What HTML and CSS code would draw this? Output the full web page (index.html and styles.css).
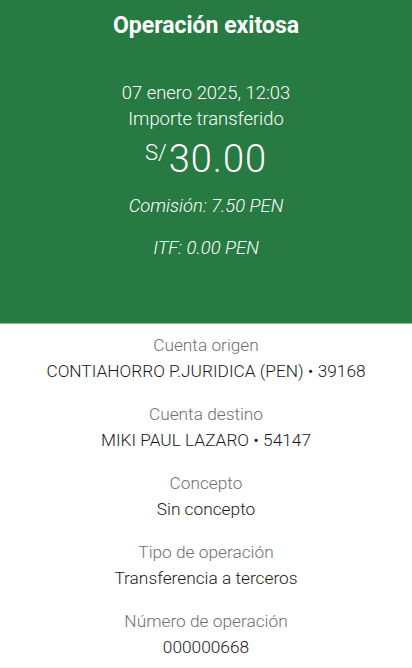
FILE: index.html
```html
<!DOCTYPE html>
<html lang="es">
<head>
    <meta charset="UTF-8">
    <meta name="viewport" content="width=device-width, initial-scale=1.0">
    <title>Operación exitosa</title>
    <link rel="stylesheet" href="styles.css">
</head>
<body>
    <div class="header">
        <h1 class="title">Operación exitosa</h1>
        <div class="date">07 enero 2025, 12:03</div>
        <div class="amount-label">Importe transferido</div>
        <div class="amount"><span class="currency">S/</span><span class="value">30.00</span></div>
        <div class="fee first">Comisión: 7.50 PEN</div>
        <div class="fee">ITF: 0.00 PEN</div>
    </div>
    <div class="details">
        <div class="item">
            <div class="label">Cuenta origen</div>
            <div class="text">CONTIAHORRO P.JURIDICA (PEN) • 39168</div>
        </div>
        <div class="item">
            <div class="label">Cuenta destino</div>
            <div class="text">MIKI PAUL LAZARO • 54147</div>
        </div>
        <div class="item">
            <div class="label">Concepto</div>
            <div class="text">Sin concepto</div>
        </div>
        <div class="item">
            <div class="label">Tipo de operación</div>
            <div class="text">Transferencia a terceros</div>
        </div>
        <div class="item">
            <div class="label">Número de operación</div>
            <div class="text">000000668</div>
        </div>
    </div>
</body>
</html>
```

FILE: styles.css
```css
body {
    font-family: Roboto, "Liberation Sans", sans-serif;
    margin: 0;
    padding: 0;
    background-color: #fff;
    height: 668px;
    overflow: hidden;
}
.header {
    background-color: #277a41;
    color: #fff;
    text-align: center;
    height: 324px;
    box-sizing: border-box;
    padding-top: 12px;
    border-bottom: 1px solid #8fbc9c;
}
.title {
    font-size: 23px;
    font-weight: 700;
    margin: 0;
    line-height: 28px;
}
.date {
    margin-top: 40px;
    font-size: 18.4px;
    font-weight: 300;
    line-height: 26px;
}
.amount-label {
    font-size: 18.4px;
    font-weight: 300;
    line-height: 26px;
}
.amount {
    font-weight: 300;
    line-height: 42px;
}
.currency {
    font-size: 22px;
    vertical-align: 12px;
    margin-right: 2px;
}
.value {
    font-size: 38px;
    letter-spacing: 1px;
}
.fee {
    font-size: 18.4px;
    font-weight: 300;
    font-style: italic;
    line-height: 26px;
    margin-top: 16px;
}
.fee.first {
    margin-top: 5px;
}
.details {
    text-align: center;
    padding-top: 8px;
    height: 335px;
    border-bottom: 1px solid #f0f0f0;
}
.item {
    margin-bottom: 17px;
}
.label {
    color: #6f6f6f;
    font-size: 17.3px;
    font-weight: 300;
    line-height: 26px;
}
.text {
    color: #1a1a1a;
    font-size: 17.3px;
    font-weight: 300;
    line-height: 26px;
}
```
